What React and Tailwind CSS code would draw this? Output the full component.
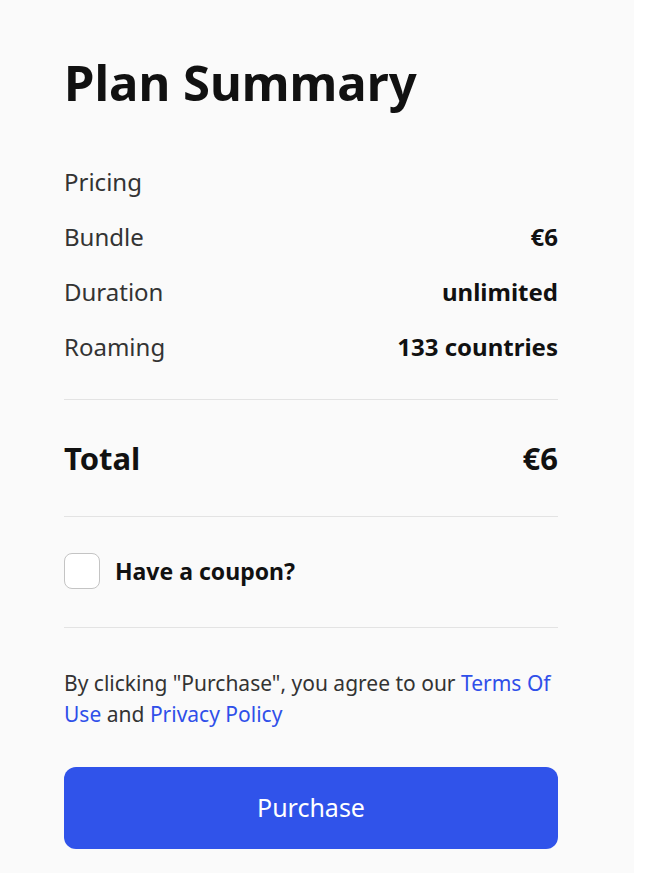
import React from 'react';

export default function App() {
  const rows = [
    ['Bundle', '€6'],
    ['Duration', 'unlimited'],
    ['Roaming', '133 countries'],
  ];

  return (
    <div className="min-h-[873px] bg-white font-['Noto_Sans',sans-serif]">
      <div className="w-[634px] min-h-[873px] bg-[#fafafa] pl-16 pt-[50px] pb-6">
        <div className="w-[494px]">
          <h1 className="text-[49px] leading-[64px] font-bold text-[#111]">Plan Summary</h1>

          <div className="mt-[52px] flex flex-col gap-[23px] text-[24px] leading-[32px]">
            <div className="text-[#333]">Pricing</div>
            {rows.map(([label, value]) => (
              <div key={label} className="flex items-center justify-between">
                <span className="text-[#333]">{label}</span>
                <span className="font-bold text-[#111]">{value}</span>
              </div>
            ))}
          </div>

          <div className="mt-[36px] border-t border-[#e3e3e3]" />

          <div className="flex items-center justify-between py-[38px] text-[31px] leading-[40px] font-bold text-[#111]">
            <span>Total</span>
            <span>€6</span>
          </div>

          <div className="border-t border-[#e3e3e3]" />

          <label className="flex items-center gap-[15px] pt-[36px] pb-[38px]">
            <span className="w-9 h-9 rounded-lg border border-[#c4c4c4] bg-white" />
            <span className="text-[23px] leading-[36px] font-bold text-[#111]">Have a coupon?</span>
          </label>

          <div className="border-t border-[#e3e3e3]" />

          <p className="mt-[40px] text-[21px] leading-[31px] text-[#333]">
            By clicking "Purchase", you agree to our{' '}
            <a className="text-[#2f4fe9]">Terms Of Use</a> and{' '}
            <a className="text-[#2f4fe9]">Privacy Policy</a>
          </p>

          <button className="mt-[37px] w-full h-[82px] rounded-xl bg-[#3053ea] text-white text-[25px]">
            Purchase
          </button>
        </div>
      </div>
    </div>
  );
}
